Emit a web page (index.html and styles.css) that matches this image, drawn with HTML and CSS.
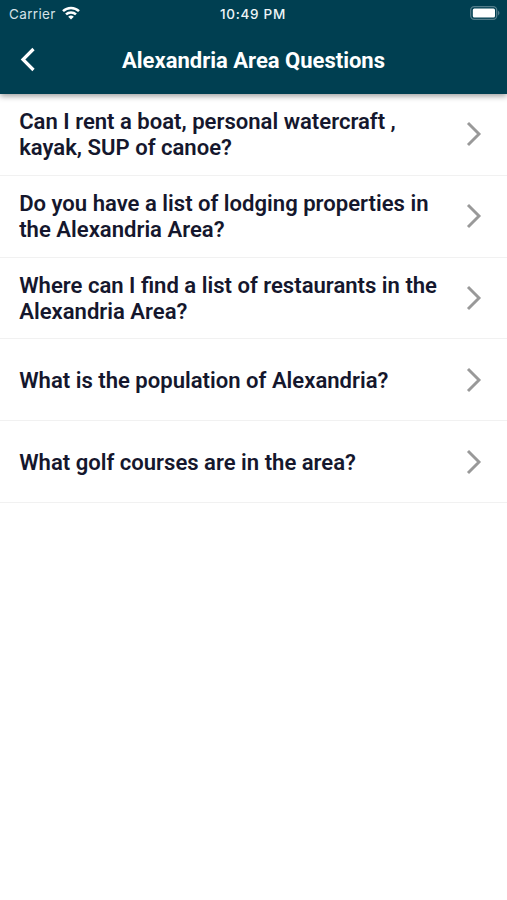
FILE: index.html
```html
<!DOCTYPE html>
<html lang="en">
<head>
<meta charset="utf-8">
<title>Alexandria Area Questions</title>
<link rel="stylesheet" href="styles.css">
</head>
<body>
<header class="header">
  <div class="status">
    <div class="carrier"><span>Carrier</span>
      <svg class="wifi" width="18" height="14" viewBox="0 0 18 14"><g fill="none" stroke="#fff" stroke-width="2.5"><path d="M1 5.2A11.5 11.5 0 0 1 17 5.2"/><path d="M4 8.4A7.2 7.2 0 0 1 14 8.4"/></g><path d="M9 13.6L6.2 10.8A4 4 0 0 1 11.8 10.8Z" fill="#fff"/></svg>
    </div>
    <div class="time">10:49 PM</div>
    <div class="power"><svg width="30" height="14" viewBox="0 0 30 14"><rect x=".7" y=".7" width="26" height="12.6" rx="3.5" fill="none" stroke="#537d8b" stroke-width="1.3"/><rect x="2.8" y="2.5" width="22.2" height="9" rx="1.5" fill="#fff"/><path d="M28 4.5Q31 7 28 9.5Z" fill="#537d8b"/></svg></div>
  </div>
  <div class="bar">
    <svg class="back" width="16" height="26" viewBox="0 0 16 26"><path d="M13.5 2L3 12.5L13.5 23" fill="none" stroke="#fff" stroke-width="3.2"/></svg>
    <h1>Alexandria Area Questions</h1>
  </div>
</header>
<main class="list">
  <div class="row"><p>Can I rent a boat, personal watercraft ,<br>kayak, SUP of canoe?</p><svg class="chev" width="16" height="26" viewBox="0 0 16 26"><path d="M2 2L13 13L2 24"/></svg></div>
  <div class="row"><p>Do you have a list of lodging properties in<br>the Alexandria Area?</p><svg class="chev" width="16" height="26" viewBox="0 0 16 26"><path d="M2 2L13 13L2 24"/></svg></div>
  <div class="row"><p>Where can I find a list of restaurants in the<br>Alexandria Area?</p><svg class="chev" width="16" height="26" viewBox="0 0 16 26"><path d="M2 2L13 13L2 24"/></svg></div>
  <div class="row"><p>What is the population of Alexandria?</p><svg class="chev" width="16" height="26" viewBox="0 0 16 26"><path d="M2 2L13 13L2 24"/></svg></div>
  <div class="row single"><p>What golf courses are in the area?</p><svg class="chev" width="16" height="26" viewBox="0 0 16 26"><path d="M2 2L13 13L2 24"/></svg></div>
</main>
</body>
</html>
```
FILE: styles.css
```css
* { box-sizing: border-box; }
body { margin: 0; background: #fff; font-family: Roboto, sans-serif; color: #15172d; }
.header { position: relative; height: 94px; background: #003f51; color: #fff; box-shadow: 0 2px 6px rgba(0,0,0,.4); }
.status { height: 26px; display: grid; grid-template-columns: 1fr auto 1fr; align-items: center; padding: 0 7px 0 9px; font: 13.5px Inter, sans-serif; }
.carrier { display: flex; align-items: center; gap: 6px; letter-spacing: .35px; }
.carrier span { color: #d5e2e7; padding-top: 2px; }
.time { font-weight: 500; font-size: 13.5px; letter-spacing: .7px; color: #eef5f7; padding-top: 2px; margin: 0 1px 0 -2px; }
.power { display: flex; justify-content: flex-end; }
.bar { height: 68px; display: grid; grid-template-columns: 60px 1fr 60px; align-items: center; }
.back { margin-left: 20px; }
h1 { margin: 2px 0 0; text-align: center; font-size: 22px; line-height: 26px; font-weight: 700; white-space: nowrap; }
.row { height: 81.8px; display: flex; align-items: center; justify-content: space-between; padding: 0 25px 0 19.2px; border-bottom: 1px solid #f1f1f1; }
.row p { margin: 1.6px 0 0; font-size: 22.08px; line-height: 25.8px; font-weight: 600; white-space: nowrap; }
.row.single p { margin-top: 2.6px; }
.chev { flex: none; fill: none; stroke: #999; stroke-width: 2.9; }
```
